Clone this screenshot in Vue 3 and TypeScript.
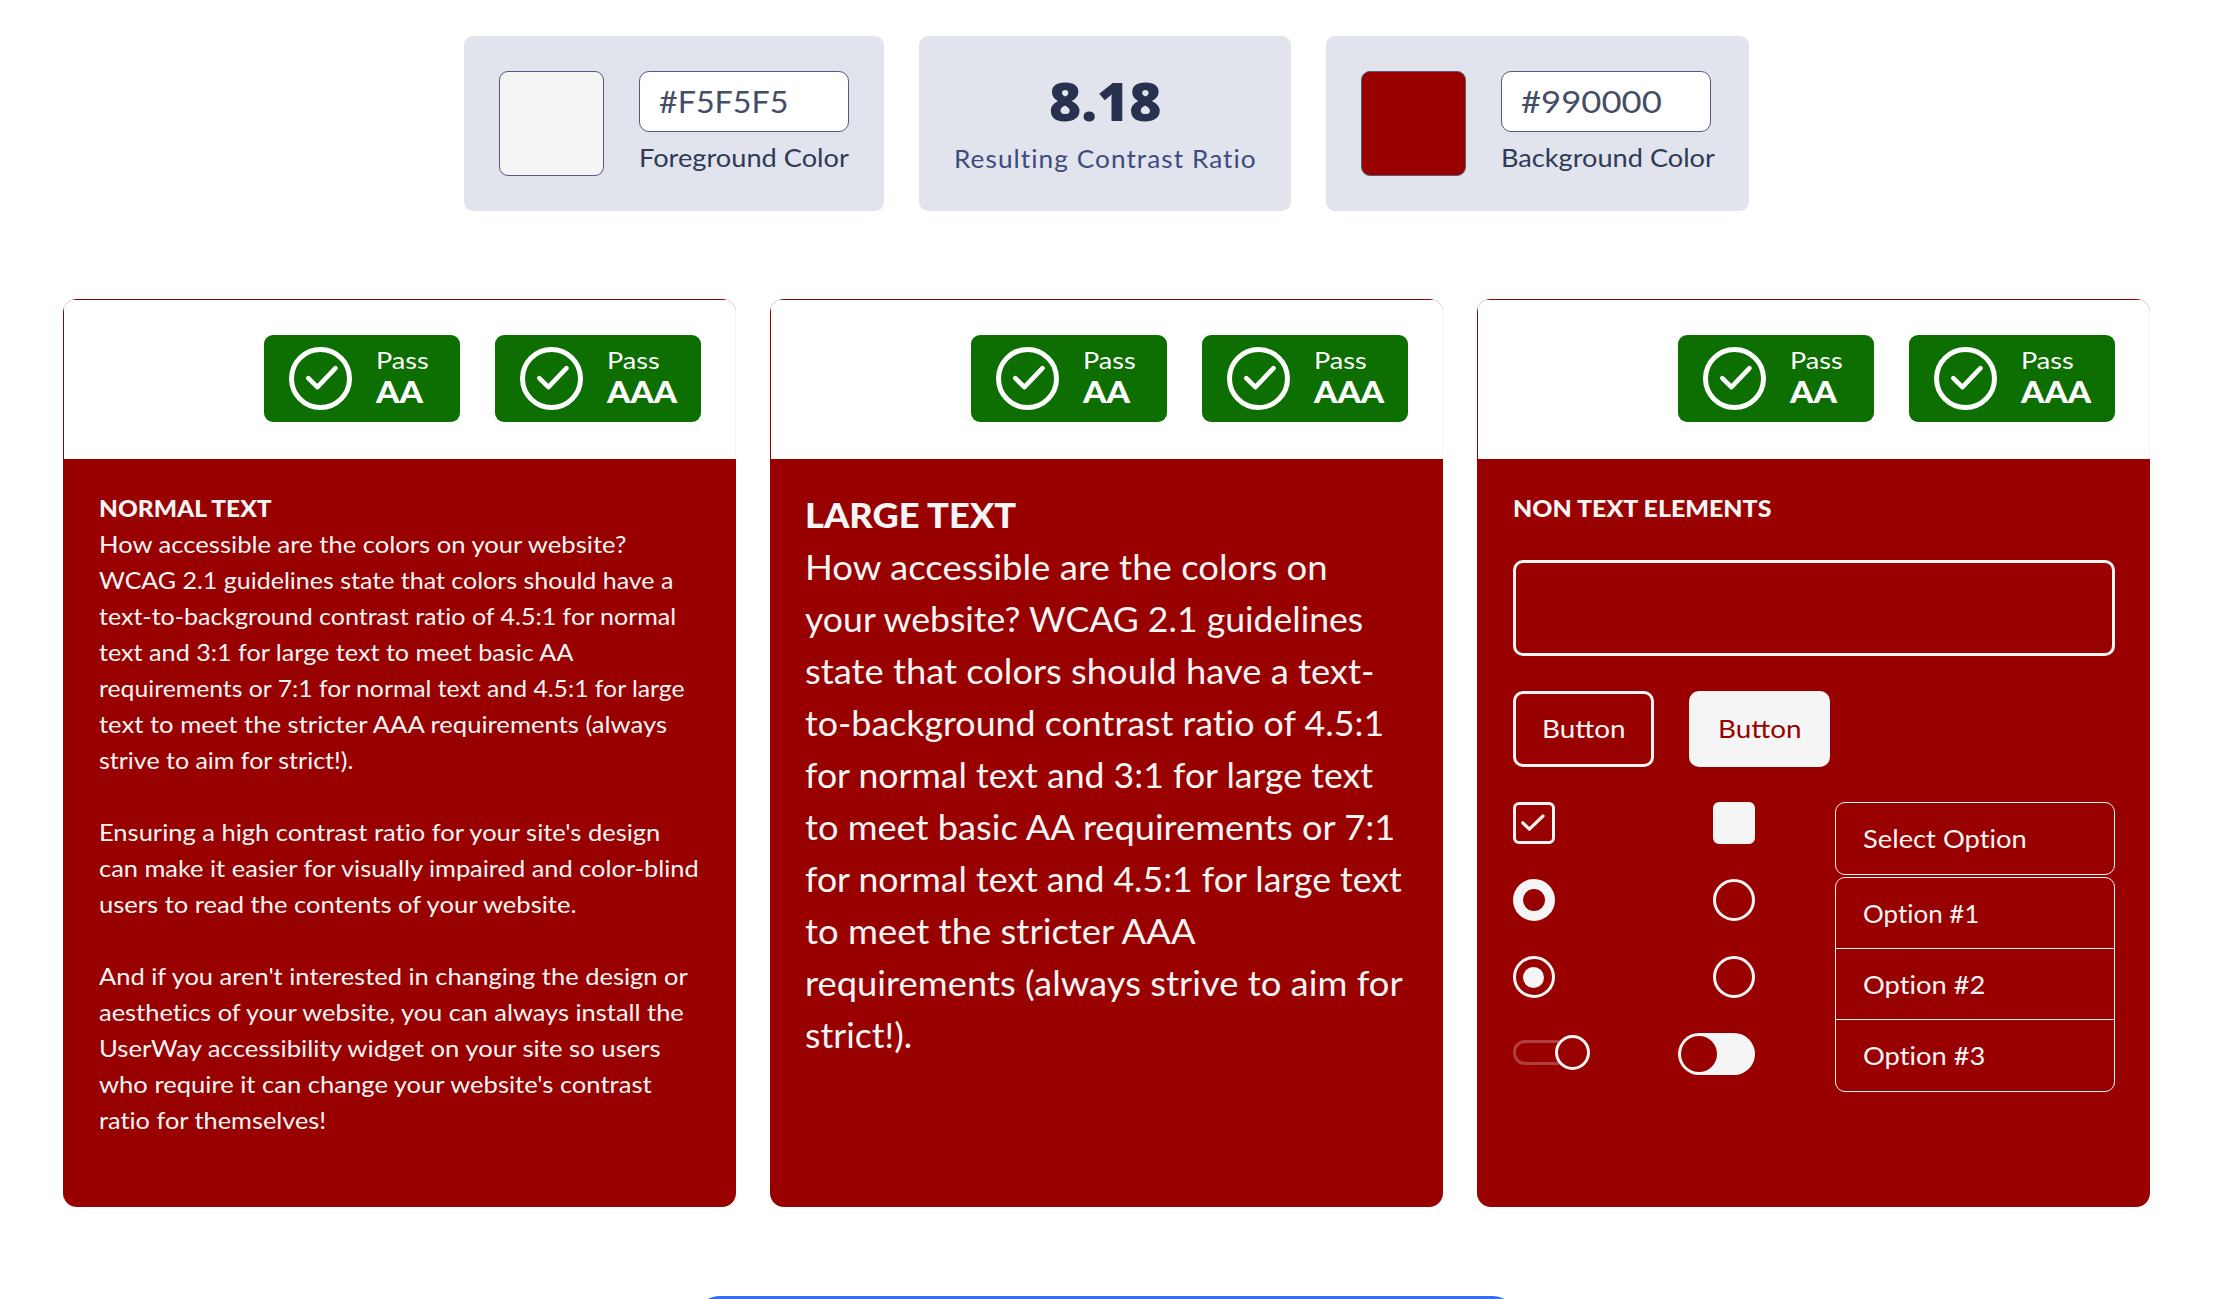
<script setup lang="ts">
import type { Directive } from 'vue'

interface Line { text: string; width: number }

// Stretches a single line of text so that it spans the given width.
const vFit: Directive<HTMLElement, number> = {
  mounted(el, binding) {
    const natural = el.offsetWidth
    if (natural > 0) el.style.transform = `scaleX(${binding.value / natural})`
  },
}

const badges: Line[] = [
  { text: 'AA', width: 47 },
  { text: 'AAA', width: 70 },
]

const paragraphs: Line[][] = [
  [
    { text: 'How accessible are the colors on your website?', width: 527 },
    { text: 'WCAG 2.1 guidelines state that colors should have a', width: 574 },
    { text: 'text-to-background contrast ratio of 4.5:1 for normal', width: 577 },
    { text: 'text and 3:1 for large text to meet basic AA', width: 474 },
    { text: 'requirements or 7:1 for normal text and 4.5:1 for large', width: 586 },
    { text: 'text to meet the stricter AAA requirements (always', width: 568 },
    { text: 'strive to aim for strict!).', width: 254 },
  ],
  [
    { text: "Ensuring a high contrast ratio for your site's design", width: 561 },
    { text: 'can make it easier for visually impaired and color-blind', width: 600 },
    { text: 'users to read the contents of your website.', width: 477 },
  ],
  [
    { text: "And if you aren't interested in changing the design or", width: 589 },
    { text: 'aesthetics of your website, you can always install the', width: 585 },
    { text: 'UserWay accessibility widget on your site so users', width: 562 },
    { text: "who require it can change your website's contrast", width: 553 },
    { text: 'ratio for themselves!', width: 227 },
  ],
]

const largeLines: Line[] = [
  { text: 'How accessible are the colors on', width: 523 },
  { text: 'your website? WCAG 2.1 guidelines', width: 558 },
  { text: 'state that colors should have a text-', width: 569 },
  { text: 'to-background contrast ratio of 4.5:1', width: 579 },
  { text: 'for normal text and 3:1 for large text', width: 568 },
  { text: 'to meet basic AA requirements or 7:1', width: 590 },
  { text: 'for normal text and 4.5:1 for large text', width: 597 },
  { text: 'to meet the stricter AAA', width: 391 },
  { text: 'requirements (always strive to aim for', width: 598 },
  { text: 'strict!).', width: 107 },
]

const options: Line[] = [
  { text: 'Option #1', width: 116 },
  { text: 'Option #2', width: 122 },
  { text: 'Option #3', width: 122 },
]

const cards = ['normal', 'large', 'elements'] as const
</script>

<template>
  <main class="page">
    <section class="summary">
      <div class="tile">
        <div class="swatch light"></div>
        <div class="field">
          <div class="hex"><span v-fit="130" class="fit">#F5F5F5</span></div>
          <span v-fit="210" class="fit label">Foreground Color</span>
        </div>
      </div>
      <div class="tile result">
        <strong v-fit="112" class="fit ratio">8.18</strong>
        <span v-fit="303" class="fit caption">Resulting Contrast Ratio</span>
      </div>
      <div class="tile background">
        <div class="swatch dark"></div>
        <div class="field">
          <div class="hex"><span v-fit="141" class="fit">#990000</span></div>
          <span v-fit="214" class="fit label">Background Color</span>
        </div>
      </div>
    </section>

    <section class="cards">
      <article v-for="card in cards" :key="card" class="card">
        <header class="card-head">
          <div v-for="b in badges" :key="b.text" class="badge" :class="b.text.toLowerCase()">
            <svg width="63" height="63" viewBox="0 0 63 63" fill="none" stroke="#fff" stroke-width="5">
              <circle cx="31.5" cy="31.5" r="29" />
              <path d="M19.3 31.2 28.4 40.2 46.5 21.2" stroke-width="4.6" stroke-linecap="round" stroke-linejoin="round" />
            </svg>
            <div class="badge-text">
              <span v-fit="53" class="fit pass">Pass</span>
              <b v-fit="b.width" class="fit level">{{ b.text }}</b>
            </div>
          </div>
        </header>

        <div v-if="card === 'normal'" class="card-body normal">
          <h2 v-fit="173" class="fit">NORMAL TEXT</h2>
          <p v-for="(p, i) in paragraphs" :key="i">
            <span v-for="l in p" :key="l.text" v-fit="l.width" class="fit">{{ l.text }}</span>
          </p>
        </div>

        <div v-else-if="card === 'large'" class="card-body large">
          <h2 v-fit="211" class="fit">LARGE TEXT</h2>
          <p>
            <span v-for="l in largeLines" :key="l.text" v-fit="l.width" class="fit">{{ l.text }}</span>
          </p>
        </div>

        <div v-else class="card-body elements">
          <h2 v-fit="258" class="fit">NON TEXT ELEMENTS</h2>
          <div class="textbox"></div>
          <div class="buttons">
            <button class="outline"><span v-fit="83" class="fit">Button</span></button>
            <button class="solid"><span v-fit="83" class="fit">Button</span></button>
          </div>
          <div class="controls">
            <div class="column">
              <div class="check">
                <svg width="36" height="36" viewBox="0 0 36 36" fill="none" stroke="#f5f5f5" stroke-width="3.2" stroke-linecap="round" stroke-linejoin="round">
                  <path d="M6.8 17.8 13.4 24.2 27 11" />
                </svg>
              </div>
              <div class="radio ring"></div>
              <div class="radio dot"></div>
              <div class="slider"><i></i><b></b></div>
            </div>
            <div class="column right">
              <div class="check filled"></div>
              <div class="radio"></div>
              <div class="radio"></div>
              <div class="switch"></div>
            </div>
            <div class="select">
              <div class="selected"><span v-fit="164" class="fit">Select Option</span></div>
              <ul>
                <li v-for="o in options" :key="o.text"><span v-fit="o.width" class="fit">{{ o.text }}</span></li>
              </ul>
            </div>
          </div>
        </div>
      </article>
    </section>

    <div class="cta"></div>
  </main>
</template>

<style>
body { margin: 0; background: #fff; }
</style>

<style scoped>
* { box-sizing: border-box; }
.page {
  height: 1299px;
  overflow: hidden;
  padding-top: 36px;
  display: flex;
  flex-direction: column;
  font-family: Lato, "Open Sans", sans-serif;
  font-variant-ligatures: none;
  color: #f5f5f5;
}
.fit {
  display: block;
  width: max-content;
  white-space: nowrap;
  transform-origin: left center;
}
h2, p, ul { margin: 0; padding: 0; }

.summary { display: flex; gap: 35px; margin-left: 464px; height: 175px; flex: none; }
.tile { display: flex; gap: 35px; width: 420px; padding: 35px; border-radius: 9px; background: #e1e4ed; }
.tile.background { width: 423px; }
.tile.result { display: block; width: 372px; }
.swatch { width: 105px; height: 105px; border: 1px solid #535a7b; border-radius: 9px; flex: none; }
.light { background: #f5f5f5; }
.dark { background: #990000; }
.field { width: 210px; }
.hex {
  height: 61px;
  padding-left: 19px;
  border: 1px solid #535a7b;
  border-radius: 10px;
  background: #fff;
  color: #454d66;
  font-size: 30.5px;
  line-height: 58px;
}
.label { font-size: 25px; line-height: 51px; color: #2f3a57; }
.ratio { margin-left: 95px; font-family: "Open Sans", sans-serif; font-size: 53px; line-height: 60px; font-weight: 800; color: #283150; }
.caption { line-height: 55px; font-size: 25px; color: #3f4b7d; letter-spacing: 1px; }

.cards { display: flex; gap: 34px; margin: 88px 0 0 63px; }
.card { width: 673px; height: 908px; border-radius: 14px; background: #990000; overflow: hidden; flex: none; }
.card-head {
  display: flex;
  justify-content: flex-end;
  gap: 35px;
  height: 159px;
  margin: 1px 0 0 1px;
  padding: 35px 34px 0 0;
  border-right: 1px solid #f5f5f5;
  background: #fff;
}
.badge { display: flex; gap: 24px; width: 196px; height: 87px; padding: 12px 0 0 25px; border-radius: 9px; background: #0d6e02; color: #fff; }
.badge.aaa { width: 206px; }
.pass { font-size: 23.5px; line-height: 26px; }
.level { font-size: 30px; line-height: 37px; font-weight: 900; }

.card-body { padding: 31px 35px 0 36px; font-size: 24px; line-height: 36px; }
.card-body h2 { font-size: inherit; font-weight: 900; }
.normal h2, .elements h2 { font-size: 23.5px; line-height: 37px; margin-bottom: -1px; }
.normal p + p { margin-top: 36px; }
.card-body.large { padding: 30px 35px 0; font-size: 34px; line-height: 52px; }

.textbox { height: 96px; margin-top: 34px; border: 3px solid #f5f5f5; border-radius: 10px; }
.buttons { display: flex; gap: 35px; margin-top: 35px; }
button { width: 141px; height: 76px; padding: 0 0 2px 26px; border: 3px solid #f5f5f5; border-radius: 10px; background: none; color: #f5f5f5; font: 25.5px Lato, sans-serif; }
button.solid { background: #f5f5f5; color: #990000; }
.controls { display: flex; margin-top: 35px; }
.column { display: flex; flex-direction: column; gap: 35px; width: 121px; }
.column.right { align-items: flex-end; }
.check { width: 42px; height: 42px; border: 3px solid #f5f5f5; border-radius: 6px; }
.check svg { display: block; }
.check.filled { background: #f5f5f5; }
.radio { width: 42px; height: 42px; border: 3px solid #f5f5f5; border-radius: 50%; }
.radio.ring { border-width: 10px; }
.radio.dot { padding: 8px 7px; }
.radio.dot::before { content: ""; display: block; width: 21px; height: 21px; border-radius: 50%; background: #f5f5f5; }
.slider { display: flex; align-items: center; height: 35px; margin-top: 2px; }
.slider i { width: 46px; height: 25px; margin-right: -4px; border: 3px solid rgba(245, 245, 245, .25); border-right: 0; border-radius: 12px 0 0 12px; }
.slider b { width: 35px; height: 35px; border: 3px solid #f5f5f5; border-radius: 50%; background: #990000; }
.switch { width: 77px; height: 42px; padding: 3px; border-radius: 21px; background: #f5f5f5; }
.switch::before { content: ""; display: block; width: 36px; height: 36px; border-radius: 50%; background: #990000; }
.select { width: 280px; margin-left: 80px; font-size: 25.5px; }
.selected { height: 73px; padding-left: 27px; border: 1px solid #f5f5f5; border-radius: 10px; line-height: 71px; }
ul { height: 215px; margin-top: 2px; border: 1px solid #f5f5f5; border-radius: 10px; list-style: none; }
li { height: 71px; padding-left: 27px; line-height: 70px; }
li:first-child { height: 70px; }
li + li { border-top: 1px solid #f5f5f5; }

.cta { width: 818px; height: 70px; margin: 89px 0 0 697px; border-radius: 22px; background: #346df1; flex: none; }
</style>
